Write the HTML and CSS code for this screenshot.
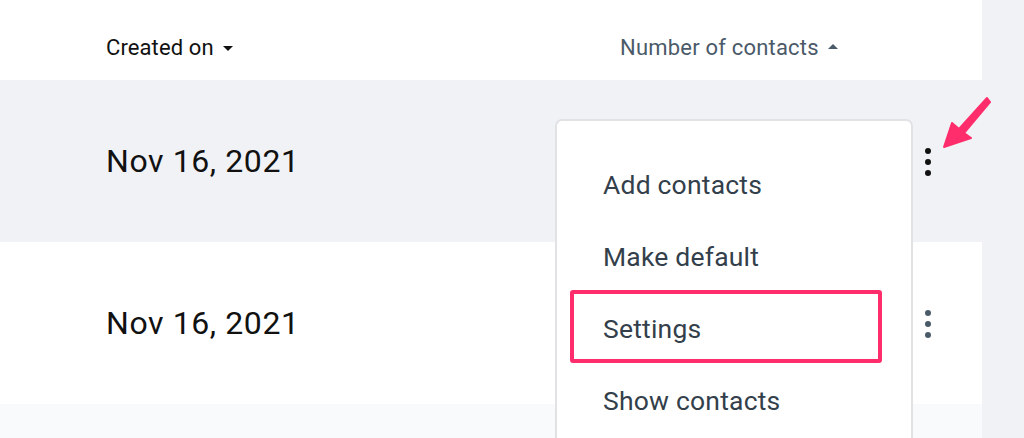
FILE: index.html
```html
<!DOCTYPE html>
<html>
<head>
<meta charset="utf-8">
<link rel="stylesheet" href="styles.css">
</head>
<body>
<div class="page">
  <div class="table">
    <div class="row head">
      <div class="col-date"><span class="sort">Created on<span class="caret down"></span></span></div>
      <div class="col-num"><span class="sort muted">Number of contacts<span class="caret up"></span></span></div>
      <div class="col-act"></div>
    </div>
    <div class="row body shade">
      <div class="col-date date">Nov 16, 2021</div>
      <div class="col-num"></div>
      <div class="col-act"><span class="kebab dark"><i></i><i></i><i></i></span></div>
    </div>
    <div class="row body">
      <div class="col-date date">Nov 16, 2021</div>
      <div class="col-num"></div>
      <div class="col-act"><span class="kebab"><i></i><i></i><i></i></span></div>
    </div>
    <div class="row body light"></div>
  </div>
  <div class="gutter"></div>

  <div class="menu">
    <div class="item">Add contacts</div>
    <div class="item">Make default</div>
    <div class="item active">Settings<span class="hl"></span></div>
    <div class="item">Show contacts</div>
  </div>

  <svg class="arrow" width="60" height="60" viewBox="0 0 60 60">
    <polygon points="1,53 9,29 16,35 44,4 47,8 21,39 28,44" fill="#ff2d6b" stroke="#ff2d6b" stroke-width="2" stroke-linejoin="round"/>
  </svg>
</div>
</body>
</html>
```

FILE: styles.css
```css
* { box-sizing: border-box; }
html, body { margin: 0; padding: 0; }
body {
  font-family: Roboto, "Noto Sans", Arial, sans-serif;
  background: #f1f2f6;
  width: 1024px;
  height: 438px;
  overflow: hidden;
}
.page {
  position: relative;
  display: flex;
  width: 1024px;
  height: 438px;
}
.table {
  width: 982px;
  display: flex;
  flex-direction: column;
  background: #fff;
}
.gutter {
  flex: 1;
  background: #f1f2f6;
}
.row {
  display: flex;
  align-items: center;
}
.row.head { height: 80px; background: #fff; padding-top: 14px; }
.row.body { height: 162px; }
.row.shade { background: #f1f2f6; }
.row.light { background: #f9fafb; flex: 1; }
.col-date { width: 620px; padding-left: 106px; }
.col-num { width: 290px; }
.col-act { flex: 1; display: flex; padding-left: 15px; }
.sort {
  font-size: 22px;
  color: #111;
  display: inline-flex;
  align-items: center;
  letter-spacing: 0.1px;
}
.sort.muted { color: #4b5a69; letter-spacing: 0.2px; }
.caret {
  display: inline-block;
  width: 0; height: 0;
  margin-left: 9px;
  border-left: 5px solid transparent;
  border-right: 5px solid transparent;
}
.caret.down { border-top: 5px solid #111; margin-top: 2px; }
.caret.up { border-bottom: 5px solid #4b5a69; margin-top: -1px; }
.date {
  font-size: 32px;
  color: #111;
  letter-spacing: 0.6px;
}
.kebab {
  display: flex;
  flex-direction: column;
  gap: 5px;
  padding-top: 2px;
}
.kebab i {
  display: block;
  width: 6px; height: 6px;
  border-radius: 50%;
  background: #4b5a69;
}
.kebab.dark i { background: #111; }

.menu {
  position: absolute;
  left: 555px;
  top: 119px;
  width: 358px;
  height: 340px;
  background: #fff;
  border: 2px solid #e1e2e4;
  border-radius: 7px;
  padding-top: 27px;
}
.item {
  position: relative;
  height: 72px;
  display: flex;
  align-items: center;
  padding-left: 46px;
  font-size: 26.5px;
  color: #333f4b;
  letter-spacing: 0.2px;
}
.hl {
  position: absolute;
  left: 13px;
  top: -2px;
  width: 312px;
  height: 73px;
  border: 4px solid #ff2d6b;
  border-radius: 3px;
}
.arrow {
  position: absolute;
  left: 943px;
  top: 94px;
}
```
